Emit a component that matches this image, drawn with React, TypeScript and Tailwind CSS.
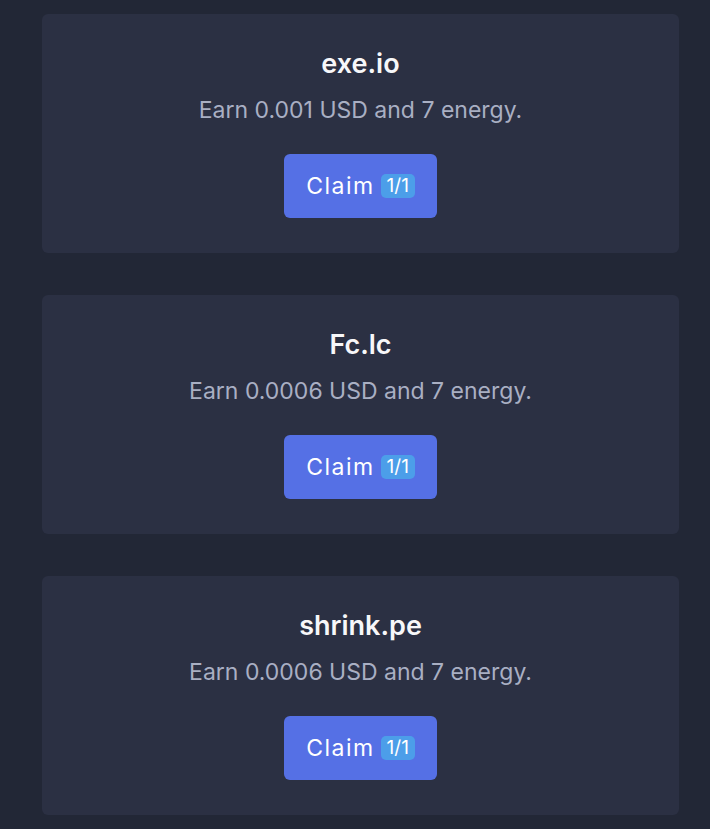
import React from "react";

const items = [
  { name: "exe.io", desc: "Earn 0.001 USD and 7 energy." },
  { name: "Fc.lc", desc: "Earn 0.0006 USD and 7 energy." },
  { name: "shrink.pe", desc: "Earn 0.0006 USD and 7 energy." },
];

export default function App() {
  return (
    <div
      className="min-h-[829px] w-full bg-[#222736] pl-[42px] pr-[31px] pt-[14px]"
      style={{ fontFamily: "Inter, 'Noto Sans', sans-serif" }}
    >
      <div className="flex flex-col gap-[42px]">
        {items.map((it) => (
          <div
            key={it.name}
            className="flex h-[239px] flex-col items-center rounded-[6px] bg-[#2b3043] pt-[32px]"
          >
            <div className="h-[36px] text-[27px] font-semibold leading-[36px] text-[#f7f7f9]">
              {it.name}
            </div>
            <div className="mt-[12px] h-[32px] text-[23px] leading-[32px] text-[#a9afc3]">
              {it.desc}
            </div>
            <button className="mt-[28px] flex h-[64px] w-[153px] items-center justify-center gap-[6px] rounded-[6px] bg-[#5570e5] text-[23px] text-white">
              <span className="tracking-[1.5px]">Claim</span>
              <span className="flex h-[24px] w-[34px] items-center justify-center rounded-[5px] bg-[#4c9ee9] text-[19px] leading-[24px]">
                1/1
              </span>
            </button>
          </div>
        ))}
      </div>
    </div>
  );
}
